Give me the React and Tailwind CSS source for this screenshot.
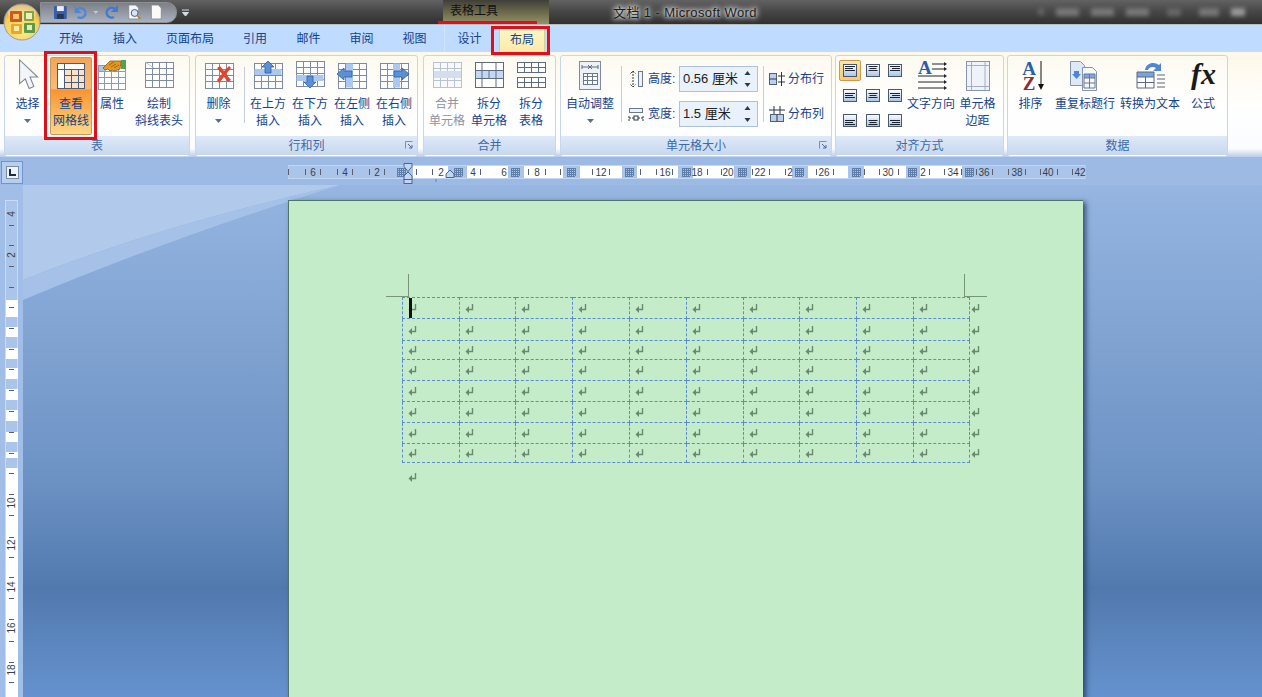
import React from "react";

// table drawn inside a ribbon icon
function Grid({ x, y, w, h, c = 4, r = 4, stroke = "#7d8ca3", fill = "#fff" }) {
  const lines = [];
  for (let i = 1; i < c; i++) {
    const p = x + (w * i) / c;
    lines.push(<line key={"c" + i} x1={p} y1={y} x2={p} y2={y + h} />);
  }
  for (let i = 1; i < r; i++) {
    const p = y + (h * i) / r;
    lines.push(<line key={"r" + i} x1={x} y1={p} x2={x + w} y2={p} />);
  }
  return (
    <g stroke={stroke} strokeWidth="1" fill="none" shapeRendering="crispEdges">
      <rect x={x + 1} y={y + 1} width={w} height={h} fill="#c9ccd2" stroke="none" />
      <rect x={x} y={y} width={w} height={h} fill={fill} />
      {lines}
    </g>
  );
}

function Icon({ children, w = 32, h = 34 }) {
  return (
    <svg width={w} height={h} viewBox={`0 0 ${w} ${h}`} className="overflow-visible">
      {children}
    </svg>
  );
}

function RibbonBtn({ className, icon, lines, arrow, disabled, active }) {
  return (
    <div
      className={`${className} mt-px h-[78px] shrink-0 flex flex-col items-center rounded-[2px] ${
        active
          ? "border border-[#c59a5c] bg-[linear-gradient(#f1a55c,#fabb78_40%,#fa9331_42%,#fdd888)]"
          : ""
      }`}
    >
      <div className={`${active ? "h-[38px] pt-px" : "h-[39px] pt-[2px]"}`}>{icon}</div>
      {lines.map((t) => (
        <div
          key={t}
          className={`text-xs leading-[17px] whitespace-nowrap ${
            disabled ? "text-[#8d949e]" : "text-[#15428b]"
          }`}
        >
          {t}
        </div>
      ))}
      {arrow && (
        <svg width="7" height="4" className="mt-[6px]">
          <path d="M0 0h7L3.5 4z" fill="#5c6f8e" />
        </svg>
      )}
    </div>
  );
}

function Group({ className, label, launcher, children }) {
  return (
    <div
      className={`${className} shrink-0 flex flex-col rounded-[3px] border border-[#c7d6ea] bg-[linear-gradient(#fdfaf0,#ffffff_50%,#fbfcfe)]`}
    >
      <div className="h-[80px] flex">{children}</div>
      <div className="relative h-[19px] flex items-center justify-center text-xs text-[#3d6aa8] bg-[linear-gradient(#dfe9f8,#c6d8ef)]">
        {label}
        {launcher && (
          <svg width="8" height="8" className="absolute right-[4px] top-[5px]">
            <path d="M0.5 0.5h7M0.5 0.5v7" stroke="#7e8fa8" fill="none" />
            <path d="M3 3l4 4M7 4v3H4" stroke="#4f6b94" fill="none" />
          </svg>
        )}
      </div>
    </div>
  );
}

function VSep({ className }) {
  return <div className={`${className} w-px bg-[#c4cfdd]`} />;
}

function ArrowBlue({ d }) {
  return <path d={d} fill="#5b8fd6" stroke="#2f5f9e" strokeWidth="0.8" />;
}

function AlignIcon({ rows, side }) {
  // rows: vertical place of the lines, side: left/center/right
  const widths = [10, 8, 10];
  const y0 = rows === "top" ? 2 : rows === "mid" ? 4 : 6;
  return (
    <svg width="14" height="13">
      <defs>
        <linearGradient id="alignFill" x1="0" y1="0" x2="0" y2="1">
          <stop offset="0" stopColor="#ffffff" />
          <stop offset="1" stopColor="#a9c2e4" />
        </linearGradient>
      </defs>
      <rect x="0.5" y="0.5" width="13" height="12" fill="url(#alignFill)" stroke="#47586f" />
      {widths.map((w, i) => {
        const wd = side === "center" ? w - 1 : w;
        const x = side === "left" ? 2 : side === "right" ? 12 - wd : 7 - wd / 2;
        return <rect key={i} x={x} y={y0 + i * 2} width={wd} height="1" fill="#1c2430" />;
      })}
    </svg>
  );
}

function ReturnMark() {
  return (
    <svg width="10" height="10" className="block">
      <path d="M7.5 1v5.5H3" stroke="#6a8a70" strokeWidth="1.4" fill="none" />
      <path d="M0.5 6.5L4 3v7z" fill="#6a8a70" />
    </svg>
  );
}

function Spinner({ value }) {
  return (
    <div className="w-[79px] h-[26px] flex items-center justify-between pl-[3px] pr-[6px] bg-[#e9f1fb] border border-[#adc2de] text-[13px] text-[#222]">
      <span className="whitespace-nowrap">{value}</span>
      <svg width="7" height="18">
        <path d="M3.5 1L6.5 5H0.5z M0.5 13H6.5L3.5 17z" fill="#2d3a4e" />
      </svg>
    </div>
  );
}

const hTicks = [288, 305, 320, 337, 352, 369, 384, 416, 432, 480, 528, 545, 560, 592, 609, 640, 656, 672, 707, 721, 752, 769, 785, 816, 833, 864, 879, 898, 929, 944, 961, 976, 992, 1008, 1025, 1040, 1057, 1072];
const hLabels = [[313, "6"], [345, "4"], [377, "2"], [441, "2"], [473, "4"], [504, "6"], [537, "8"], [601, "12"], [665, "16"], [697, "18"], [728, "20"], [760, "22"], [790, "2"], [824, "26"], [888, "30"], [923, "2"], [953, "34"], [984, "36"], [1017, "38"], [1048, "40"], [1080, "42"]];
const hWhite = [[413, 448], [467, 508], [524, 563], [580, 622], [637, 678], [693, 734], [751, 792], [808, 848], [864, 906], [920, 962]];
const hMarks = [401, 458, 515, 571, 629, 686, 742, 799, 856, 912, 969];

function TopRuler() {
  return (
    <svg width="800" height="28" viewBox="288 157 800 28" className="block">
      <rect x="288" y="166" width="797" height="12" fill="#abc5ea" />
      <rect x="288" y="165.5" width="797" height="13" fill="none" stroke="#c3d7f2" />
      {hWhite.map(([a, b]) => (
        <rect key={a} x={a} y="166" width={b - a} height="12" fill="#fff" />
      ))}
      {hTicks.map((x) => (
        <line key={x} x1={x} x2={x} y1="169" y2="175" stroke="#555f6e" shapeRendering="crispEdges" />
      ))}
      {hLabels.map(([x, t]) => (
        <text key={x + t} x={x} y="175.5" textAnchor="middle" fontSize="10" fontFamily="Liberation Sans" fill="#3a3f48">
          {t}
        </text>
      ))}
      {hMarks.map((x) => (
        <g key={x} stroke="#5f7ea9" shapeRendering="crispEdges">
          {[-4, -2, 0, 2, 4].map((d) => (
            <line key={"v" + d} x1={x + d} x2={x + d} y1="168" y2="176" />
          ))}
          {[-4, -2, 0, 2, 4].map((d) => (
            <line key={"h" + d} x1={x - 4} x2={x + 4} y1={172 + d} y2={172 + d} />
          ))}
        </g>
      ))}
      <g fill="#c3d6f1" stroke="#4a6790">
        <path d="M404 163.5h8v3l-4 5-4-5z" />
        <path d="M408 172l4 4v3.5h-8V176z" />
        <rect x="404" y="179.5" width="8" height="4" />
        <path d="M450 170l4 4v3.5h-8V174z" />
      </g>
      <line x1="436" x2="436" y1="179" y2="182" stroke="#6f84a3" />
    </svg>
  );
}

const vTicks = [225, 245, 266, 287, 307, 328, 349, 369, 390, 411, 432, 453, 473, 494, 515, 537, 557, 577, 598, 619, 641, 662, 682];
const vLabels = [[214, "4"], [255, "2"], [503, "10"], [545, "12"], [587, "14"], [628, "16"], [670, "18"]];
const vWhite = [[300, 317], [327, 337], [348, 359], [368, 379], [389, 400], [410, 421], [432, 442], [452, 458], [468, 697]];

function SideRuler() {
  return (
    <svg width="23" height="512" viewBox="0 185 23 512" className="block">
      <rect x="5.5" y="200.5" width="12" height="497" fill="#abc5ea" stroke="#c9dbf4" />
      {vWhite.map(([a, b]) => (
        <rect key={a} x="6" y={a} width="12" height={b - a} fill="#fff" />
      ))}
      {vTicks.map((y) => (
        <line key={y} x1="9" x2="14" y1={y} y2={y} stroke="#555f6e" shapeRendering="crispEdges" />
      ))}
      {vLabels.map(([y, t]) => (
        <text key={y} transform={`translate(15 ${y}) rotate(-90)`} textAnchor="middle" fontSize="10" fontFamily="Liberation Sans" fill="#3a3f48">
          {t}
        </text>
      ))}
    </svg>
  );
}

const colClasses = ["w-[57px]", "w-[56px]", "w-[57px]", "w-[57px]", "w-[57px]", "w-[57px]", "w-[56px]", "w-[57px]", "w-[57px]", "w-[56px]"];
const rowClasses = ["h-[21px]", "h-[22px]", "h-[19px]", "h-[21px]", "h-[21px]", "h-[21px]", "h-[21px]", "h-[19px]"];

export default function App() {
  return (
    <div className="relative w-[1262px] h-[697px] overflow-hidden flex flex-col font-['Liberation_Sans','Noto_Sans_CJK_SC',sans-serif]">
      {/* Title bar */}
      <div className="h-[25px] shrink-0 flex bg-[linear-gradient(#626262,#484848_45%,#303030)] border-b border-[#b9bcc0]">
        <div className="w-[403px] ml-[40px] shrink-0 flex items-start">
          <div className="mt-[2px] w-[137px] h-[21px] flex items-center rounded-r-[10px] border border-[#8b8f96] bg-[linear-gradient(#7d7f85,#a9b1bf)] pl-[12px]">
            <svg width="125" height="17" viewBox="0 0 125 17">
              <rect x="1" y="2" width="13" height="13" rx="1" fill="#3a5da8" />
              <rect x="4" y="2" width="7" height="5" fill="#e8eef8" />
              <rect x="4" y="10" width="7" height="5" fill="#27365c" />
              <path d="M24 6a5 5 0 1 1 1 7" stroke="#4f86d8" strokeWidth="2.4" fill="none" />
              <path d="M22 2v7h7z" fill="#4f86d8" />
              <path d="M41 7h5l-2.5 3z" fill="#c5cbd6" />
              <path d="M63 5a5 5 0 1 0 -1 8" stroke="#3f7ad2" strokeWidth="2.4" fill="none" />
              <path d="M66 1v7h-7z" fill="#3f7ad2" />
              <path d="M77 1h7l3 3v11H77z" fill="#f4f6f8" stroke="#7b828c" strokeWidth="0.7" />
              <circle cx="83" cy="9" r="3.5" fill="#d7e6f6" stroke="#4a5566" />
              <path d="M85.5 11.5L89 15" stroke="#b78235" strokeWidth="1.6" />
              <path d="M100 1h7l3 3v11h-10z" fill="#fbfbf6" stroke="#7b828c" strokeWidth="0.7" />
            </svg>
          </div>
          <svg width="8" height="8" className="ml-[5px] mt-[9px]">
            <path d="M0 1h7M0.5 3.5h6L3.5 7z" stroke="#d7dbe2" fill="#d7dbe2" strokeWidth="1" />
          </svg>
        </div>
        <div className="w-[106px] shrink-0 pl-[7px] text-xs leading-[22px] text-[#111] bg-[linear-gradient(#3f3f39,#6f6d4c_55%,#95926a)]">
          表格工具
        </div>
        <div className="ml-[64px] w-[146px] shrink-0 text-[13px] leading-[26px] tracking-[0.4px] whitespace-nowrap text-[#1b1b1b] [text-shadow:0_0_6px_#f2f2f2,0_0_6px_#f2f2f2,0_0_3px_#d8d8d8]">
          文档 1 - Microsoft Word
        </div>
        <div className="flex-1 flex items-start justify-end gap-[12px] pt-[8px] pr-[17px] blur-[2px]">
          <div className="w-[6px] h-[7px] bg-[#666]" />
          <div className="w-[23px] h-[8px] bg-[#777]" />
          <div className="w-[23px] h-[8px] bg-[#777]" />
          <div className="w-[23px] h-[8px] bg-[#777]" />
          <div className="w-[14px] h-[8px] bg-[#666] mx-[6px]" />
          <div className="w-[20px] h-[8px] bg-[#777]" />
          <div className="w-[14px] h-[8px] bg-[#999]" />
        </div>
      </div>

      {/* Tabs */}
      <div className="h-[27px] shrink-0 flex items-stretch pl-[44px] bg-[#bfdbff] text-xs text-[#15428b]">
        {[
          ["开始", "w-[54px]"],
          ["插入", "w-[54px]"],
          ["页面布局", "w-[76px]"],
          ["引用", "w-[54px]"],
          ["邮件", "w-[53px]"],
          ["审阅", "w-[53px]"],
          ["视图", "w-[53px]"],
        ].map(([t, w]) => (
          <div key={t} className={`${w} flex items-center justify-center pt-px`}>
            {t}
          </div>
        ))}
        <div className="w-px ml-[3px] bg-[#d3e3f8]" />
        <div className="w-[47px] ml-px flex items-center justify-center pt-px">设计</div>
        <div className="w-[46px] ml-[6px] mt-[2px] flex items-center justify-center rounded-t-[2px] bg-[linear-gradient(#fdf6c8,#fbeba6)] border-x border-t border-[#d9cf94]">
          布局
        </div>
      </div>

      {/* Ribbon */}
      <div className="h-[105px] shrink-0 flex pl-[4px] pt-[3px] bg-[linear-gradient(#fdf8e8,#ffffff_55%,#fafcff_92%,#b9cce6)]">
        <Group className="w-[186px]" label="表">
          <RibbonBtn
            className="w-[45px]"
            lines={["选择"]}
            arrow
            icon={
              <Icon>
                <path d="M8 1v25l6-5 4 10 5-2-4-10h8z" transform="scale(0.95)" fill="#f3f5f8" stroke="#7b8797" strokeWidth="1.1" />
              </Icon>
            }
          />
          <RibbonBtn
            className="w-[42px]"
            active
            lines={["查看", "网格线"]}
            icon={
              <Icon w={30} h={36}>
                <g transform="translate(0 2)">
                  <rect x="1" y="2" width="28" height="25" fill="#f8e2cb" />
                  <rect x="1" y="2" width="28" height="6" fill="#fff" />
                  <rect x="1" y="2" width="7" height="25" fill="#fff" />
                  <g stroke="#4d5c74" shapeRendering="crispEdges" fill="none">
                    <rect x="1.5" y="2.5" width="27" height="25" />
                    <path d="M1.5 8.5h27M8.5 2.5v25M8.5 14.5h20M8.5 21h20M15.5 8.5v19M22 8.5v19" />
                  </g>
                </g>
              </Icon>
            }
          />
          <RibbonBtn
            className="w-[40px]"
            lines={["属性"]}
            icon={
              <Icon>
                <Grid x={2} y={6} w={27} h={24} c={4} r={4} stroke="#8e9baa" />
                <rect x="3" y="7" width="7" height="5" fill="#a9c7ee" />
                <path d="M7 9l7-7h11l-1 8-5 2-3-1-2 1-2-2-3 1z" fill="#e39a22" stroke="#8a5a14" strokeWidth="0.8" />
                <path d="M13 6l5-3M15 8l5-3M18 9l5-3" stroke="#8a5a14" strokeWidth="0.8" />
                <rect x="25" y="1" width="5" height="9" fill="#4ea64a" />
              </Icon>
            }
          />
          <RibbonBtn
            className="w-[54px]"
            lines={["绘制", "斜线表头"]}
            icon={
              <Icon>
                <Grid x={2} y={3} w={28} h={25} c={4} r={4} stroke="#7d8ca3" />
                <path d="M2 3l9 6" stroke="#b7c0cc" />
              </Icon>
            }
          />
        </Group>

        <Group className="w-[223px] ml-[5px]" label="行和列" launcher>
          <RibbonBtn
            className="w-[45px]"
            lines={["删除"]}
            arrow
            icon={
              <Icon>
                <Grid x={2} y={4} w={28} h={25} />
                <path d="M14 9l3-2 4 5 5-5 2 2-5 6 5 6-3 2-4-5-5 6-2-3 5-6z" fill="#e2452b" />
              </Icon>
            }
          />
          <div className="w-[6px] flex justify-center pt-[11px]">
            <VSep className="h-[56px]" />
          </div>
          <RibbonBtn
            className="w-[42px]"
            lines={["在上方", "插入"]}
            icon={
              <Icon>
                <Grid x={2} y={4} w={28} h={25} />
                <rect x="2.5" y="10" width="27" height="6" fill="#aac8f0" />
                <ArrowBlue d="M16 2l6 6h-3v6h-6V8h-3z" />
              </Icon>
            }
          />
          <RibbonBtn
            className="w-[42px]"
            lines={["在下方", "插入"]}
            icon={
              <Icon>
                <Grid x={2} y={2} w={28} h={25} />
                <rect x="2.5" y="16" width="27" height="6" fill="#aac8f0" />
                <ArrowBlue d="M16 29l-6-6h3v-6h6v6h3z" />
              </Icon>
            }
          />
          <RibbonBtn
            className="w-[42px]"
            lines={["在左侧", "插入"]}
            icon={
              <Icon>
                <Grid x={2} y={4} w={28} h={25} />
                <rect x="10" y="4.5" width="7" height="24" fill="#aac8f0" />
                <ArrowBlue d="M1 15l7-6v3h8v6H8v3z" />
              </Icon>
            }
          />
          <RibbonBtn
            className="w-[42px]"
            lines={["在右侧", "插入"]}
            icon={
              <Icon>
                <Grid x={2} y={4} w={28} h={25} />
                <rect x="15" y="4.5" width="7" height="24" fill="#aac8f0" />
                <ArrowBlue d="M31 15l-7-6v3h-8v6h8v3z" />
              </Icon>
            }
          />
        </Group>

        <Group className="w-[133px] ml-[5px]" label="合并">
          <div className="w-[2px]" />
          <RibbonBtn
            className="w-[42px]"
            disabled
            lines={["合并", "单元格"]}
            icon={
              <Icon>
                <Grid x={2} y={3} w={28} h={25} stroke="#b9c3d0" fill="#f7f9fc" />
                <rect x="3" y="12" width="27" height="7" fill="#d4def0" />
              </Icon>
            }
          />
          <RibbonBtn
            className="w-[42px]"
            lines={["拆分", "单元格"]}
            icon={
              <Icon>
                <Grid x={2} y={3} w={28} h={25} c={1} r={3} stroke="#5e6c82" />
                <rect x="3" y="12" width="27" height="7" fill="#c4d8f4" />
                <path d="M9 11.5v8M16 11.5v8M23 11.5v8M9 3v8M23 3v8M9 20v8M23 20v8" stroke="#5e6c82" />
              </Icon>
            }
          />
          <RibbonBtn
            className="w-[42px]"
            lines={["拆分", "表格"]}
            icon={
              <Icon>
                <Grid x={2} y={3} w={28} h={10} c={4} r={2} stroke="#5e6c82" />
                <Grid x={2} y={18} w={28} h={10} c={4} r={2} stroke="#5e6c82" />
              </Icon>
            }
          />
        </Group>

        <Group className="w-[272px] ml-[4px]" label="单元格大小" launcher>
          <div className="w-px" />
          <RibbonBtn
            className="w-[56px]"
            lines={["自动调整"]}
            arrow
            icon={
              <Icon w={24}>
                <rect x="1.5" y="2.5" width="21" height="28" fill="#eef2f7" stroke="#7d8ca3" />
                <Grid x={5} y={14} w={14} h={11} c={3} r={3} stroke="#6a7990" />
                <path d="M4 8h16M4 6v4M20 6v4M10 6l4 4M14 6l-4 4" stroke="#5a6a82" />
              </Icon>
            }
          />
          <div className="w-[6px] flex justify-center pt-[10px]">
            <VSep className="h-[56px]" />
          </div>
          <div className="flex flex-col gap-[9px] pt-[10px]">
            <div className="h-[26px] flex items-center">
              <div className="w-[24px] flex justify-center">
                <svg width="15" height="18">
                  <rect x="9.5" y="1.5" width="4" height="15" fill="#eef3fa" stroke="#6a7990" />
                  <path d="M4 1v16M1.5 3.5L4 1l2.5 2.5M1.5 14.5L4 17l2.5-2.5" stroke="#2b3442" strokeDasharray="2 1" fill="none" />
                </svg>
              </div>
              <div className="w-[31px] text-xs text-[#15428b] whitespace-nowrap">高度:</div>
              <Spinner value="0.56 厘米" />
            </div>
            <div className="h-[26px] flex items-center">
              <div className="w-[24px] flex justify-center">
                <svg width="16" height="15">
                  <rect x="1.5" y="1.5" width="13" height="4" fill="#eef3fa" stroke="#6a7990" />
                  <path d="M1 11h14M1 9v5M15 9v5" stroke="#2b3442" strokeDasharray="2 1" fill="none" />
                  <rect x="6" y="9" width="4" height="4" fill="#fff" stroke="#2b3442" />
                </svg>
              </div>
              <div className="w-[31px] text-xs text-[#15428b] whitespace-nowrap">宽度:</div>
              <Spinner value="1.5 厘米" />
            </div>
          </div>
          <VSep className="h-[56px] ml-[5px] mt-[10px]" />
          <div className="flex flex-col gap-[17px] pl-[5px] pt-[14px]">
            <div className="h-[18px] flex items-center gap-[3px] text-xs text-[#15428b] whitespace-nowrap">
              <svg width="16" height="16">
                <rect x="0.5" y="2.5" width="7" height="11" fill="#bcd0ec" stroke="#4f6078" />
                <path d="M0.5 8h7M9 5h7M9 11h7M12.5 1v14" stroke="#2b3442" fill="none" />
              </svg>
              分布行
            </div>
            <div className="h-[18px] flex items-center gap-[3px] text-xs text-[#15428b] whitespace-nowrap">
              <svg width="16" height="16">
                <rect x="1.5" y="8.5" width="13" height="7" fill="#bcd0ec" stroke="#4f6078" />
                <path d="M8 8.5v7M5 0v8M11 0v8M0 4h16" stroke="#2b3442" fill="none" />
              </svg>
              分布列
            </div>
          </div>
        </Group>

        <Group className="w-[169px] ml-[3px]" label="对齐方式">
          <div className="pl-[3px] pt-[2px] grid grid-cols-3 w-[71px] h-[77px] shrink-0 content-start">
            {["top", "mid", "bot"].flatMap((r) =>
              ["left", "center", "right"].map((s) => (
                <div key={r + s} className="w-[22px] h-[25px] flex items-center justify-center">
                  <div
                    className={`w-[22px] h-[21px] flex items-center justify-center rounded-[2px] ${
                      r === "top" && s === "left"
                        ? "border border-[#c9994f] bg-[linear-gradient(#fde6a4,#fbc874)]"
                        : ""
                    }`}
                  >
                    <AlignIcon rows={r} side={s} />
                  </div>
                </div>
              ))
            )}
          </div>
          <RibbonBtn
            className="w-[48px]"
            lines={["文字方向"]}
            icon={
              <Icon>
                <text x="3" y="15" fontFamily="Liberation Serif" fontWeight="700" fontSize="19" fill="#2e5ea8">
                  A
                </text>
                <path d="M17 5h12M17 10h12M3 17h26M3 23h26M3 29h26" stroke="#1c2430" fill="none" />
                <path d="M32 5l-3-2v4zM32 10l-3-2v4zM32 17l-3-2v4zM32 23l-3-2v4zM32 29l-3-2v4z" fill="#1c2430" />
              </Icon>
            }
          />
          <RibbonBtn
            className="w-[45px]"
            lines={["单元格", "边距"]}
            icon={
              <Icon w={26}>
                <rect x="1.5" y="2.5" width="23" height="29" fill="#eef3fa" stroke="#8695aa" />
                <path d="M6.5 2.5v29M20 2.5v29M1.5 6.5h23M1.5 27.5h23" stroke="#a3afc0" />
              </Icon>
            }
          />
        </Group>

        <Group className="w-[221px] ml-[3px]" label="数据">
          <RibbonBtn
            className="w-[45px]"
            lines={["排序"]}
            icon={
              <Icon>
                <text textAnchor="middle" fontFamily="Liberation Serif" fontWeight="700" fontSize="19">
                  <tspan x="14" y="16" fill="#2e5ea8">A</tspan>
                  <tspan x="14" y="31" fill="#8a2f33">Z</tspan>
                </text>
                <path d="M26 2v25" stroke="#111" />
                <path d="M26 31l-3-6h6z" fill="#111" />
              </Icon>
            }
          />
          <RibbonBtn
            className="w-[64px]"
            lines={["重复标题行"]}
            icon={
              <Icon>
                <path d="M1.5 2.5h10l4 4v20h-14z" fill="#dfe8f5" stroke="#8695aa" />
                <path d="M5 12h5v3h2l-4.5 5L3 15h2z" fill="#4f86d8" />
                <path d="M13.5 8.5h10l4 4v19h-14z" fill="#f5f7fb" stroke="#8695aa" />
                <rect x="15" y="15" width="11" height="4" fill="#7ea6e0" />
                <path d="M15 15h11v14H15zM15 19h11M15 24h11M20.5 15v14" stroke="#6a7990" fill="none" />
              </Icon>
            }
          />
          <RibbonBtn
            className="w-[66px]"
            lines={["转换为文本"]}
            icon={
              <Icon>
                <rect x="3" y="13" width="17" height="5" fill="#5b8fd6" />
                <path d="M3 13h17v16H3zM3 18h17M3 23.5h17M11.5 18v11" stroke="#5c6b82" fill="#eef3fa" fillOpacity="0.2" />
                <path d="M23 16h8M23 20h8M23 24h8M23 28h8" stroke="#56647a" />
                <path d="M11 11c1-7 9-9 14-5l2-2v8h-8l3-3c-3-2-7-1-8 2z" fill="#4f86d8" />
              </Icon>
            }
          />
          <RibbonBtn
            className="w-[40px]"
            lines={["公式"]}
            icon={
              <Icon>
                <text x="4" y="25" fontFamily="Liberation Serif" fontStyle="italic" fontWeight="700" fontSize="30" fill="#1a1a1a">
                  fx
                </text>
              </Icon>
            }
          />
        </Group>
      </div>

      {/* Work area */}
      <div className="flex-1 flex flex-col min-h-0 bg-[linear-gradient(#9cbbe5,#92b2de_10%,#6c92c4_60%,#5279ae_80%,#6592ce)]">
        <div className="h-[28px] shrink-0 flex bg-[#9cbae4]">
          <div className="w-[22px] h-[23px] ml-px mt-[4px] shrink-0 flex items-center justify-center bg-[#b6cff1] border border-[#6f94ce]">
            <svg width="13" height="13">
              <rect x="0.5" y="0.5" width="12" height="12" fill="#edf3fb" stroke="#7c8da6" />
              <path d="M4 3v6h6" stroke="#1f2a3a" strokeWidth="2" fill="none" />
            </svg>
          </div>
          <div className="ml-[265px]">
            <TopRuler />
          </div>
        </div>
        <div className="flex-1 flex min-h-0">
          <div className="w-[23px] shrink-0 bg-[#a0bee8]">
            <SideRuler />
          </div>
          <div className="relative flex-1 min-w-0 overflow-hidden">
            <svg width="1239" height="512" viewBox="23 185 1239 512" className="absolute inset-0">
              <path d="M23 185H340Q160 225 23 280Z" fill="#b1caeb" />
              <path d="M23 280Q160 225 340 185Q170 238 23 300Z" fill="#a5c1e7" />
            </svg>
            {/* Page */}
            <div className="relative ml-[265px] mt-[15px] w-[795px] h-[520px] pl-[113px] pt-[96px] bg-[#c5ecc9] border-t border-l border-[#4f7469] shadow-[3px_2px_5px_rgba(30,50,85,0.75)]">
              <div className="absolute left-[119px] top-[73px] w-px h-[22px] bg-[#76957b]" />
              <div className="absolute left-[97px] top-[95px] w-[23px] h-px bg-[#76957b]" />
              <div className="absolute left-[675px] top-[73px] w-px h-[22px] bg-[#76957b]" />
              <div className="absolute left-[675px] top-[95px] w-[23px] h-px bg-[#76957b]" />
              <table className="border-collapse table-fixed">
                <tbody>
                  {rowClasses.map((rh, r) => (
                    <tr key={r} className={rh}>
                      {colClasses.map((cw, c) => (
                        <td key={c} className={`${cw} p-0 pl-[5px] border border-dashed border-[#5d8bd2]`}>
                          <ReturnMark />
                        </td>
                      ))}
                      <td className="p-0 pl-px">
                        <ReturnMark />
                      </td>
                    </tr>
                  ))}
                </tbody>
              </table>
              <div className="pl-[6px] pt-[9px]">
                <ReturnMark />
              </div>
              <div className="absolute left-[120px] top-[97px] w-[3px] h-[20px] bg-[#111]" />
            </div>
          </div>
        </div>
      </div>

      {/* Office button */}
      <svg width="38" height="38" viewBox="0 0 38 38" className="absolute left-[3px] top-[3px]">
        <defs>
          <radialGradient id="orb" cx="0.5" cy="0.75" r="0.7">
            <stop offset="0" stopColor="#fdea8c" />
            <stop offset="0.7" stopColor="#f6d056" />
            <stop offset="1" stopColor="#d2a544" />
          </radialGradient>
        </defs>
        <circle cx="19" cy="19" r="18" fill="url(#orb)" stroke="#9a9c9e" />
        <ellipse cx="19" cy="10" rx="14" ry="8" fill="#fff" opacity="0.35" />
        <rect x="7" y="8" width="12" height="11" rx="1" fill="#cf5a1c" />
        <rect x="10" y="11" width="6" height="5" fill="#f4c66a" />
        <rect x="21" y="8" width="10" height="10" rx="1" fill="#7fa640" />
        <rect x="23" y="10" width="6" height="6" fill="#eef0c0" />
        <rect x="21" y="20" width="11" height="10" rx="1" fill="#5a9a48" />
        <rect x="24" y="22" width="5" height="5" fill="#e7ecb4" />
        <rect x="8" y="21" width="11" height="10" rx="1" fill="#e8a62c" />
        <rect x="11" y="23" width="5" height="5" fill="#fbe9a6" />
      </svg>

      {/* Red annotations */}
      <div className="absolute left-[438px] top-[21px] w-[99px] h-[3px] bg-[#e0101a]" />
      <div className="absolute left-[491px] top-[26px] w-[59px] h-[29px] border-[3px] border-[#e0101a]" />
      <div className="absolute left-[44px] top-[51px] w-[53px] h-[89px] border-[3px] border-[#e0101a]" />
    </div>
  );
}
